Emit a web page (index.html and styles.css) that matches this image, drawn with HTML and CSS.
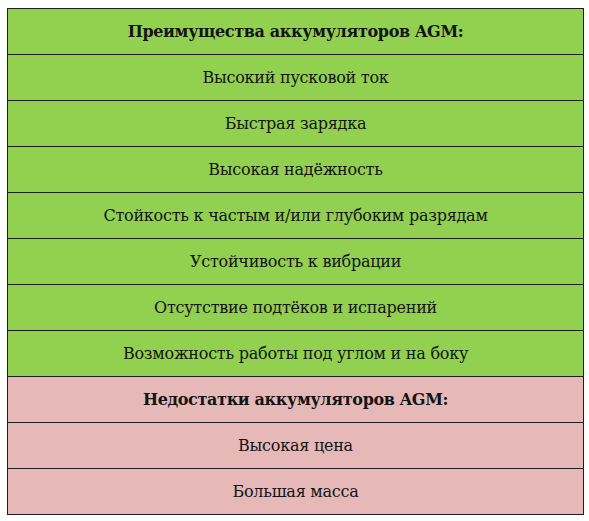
FILE: index.html
```html
<!DOCTYPE html>
<html lang="ru">
<head>
<meta charset="utf-8">
<link rel="stylesheet" href="styles.css">
</head>
<body>
<table class="agm">
  <tr class="pro head"><td>Преимущества аккумуляторов AGM:</td></tr>
  <tr class="pro"><td>Высокий пусковой ток</td></tr>
  <tr class="pro"><td>Быстрая зарядка</td></tr>
  <tr class="pro"><td>Высокая надёжность</td></tr>
  <tr class="pro"><td>Стойкость к частым и/или глубоким разрядам</td></tr>
  <tr class="pro"><td>Устойчивость к вибрации</td></tr>
  <tr class="pro"><td>Отсутствие подтёков и испарений</td></tr>
  <tr class="pro"><td>Возможность работы под углом и на боку</td></tr>
  <tr class="con head"><td>Недостатки аккумуляторов AGM:</td></tr>
  <tr class="con"><td>Высокая цена</td></tr>
  <tr class="con"><td>Большая масса</td></tr>
</table>
</body>
</html>
```
FILE: styles.css
```css
html, body {
  margin: 0;
  padding: 0;
  background: #ffffff;
}
body {
  padding: 8px 0 0 7px;
  font-family: "DejaVu Serif", "Liberation Serif", serif;
  font-size: 16px;
  letter-spacing: -0.25px;
  color: #141414;
}
.agm {
  border-collapse: collapse;
  width: 577px;
}
.agm td {
  border: 1px solid #1e1e1e;
  height: 46px;
  padding: 0;
  text-align: center;
  vertical-align: middle;
  box-sizing: border-box;
}
.pro td { background: #92d050; }
.con td { background: #e6b8b7; }
.head td {
  font-weight: bold;
  letter-spacing: -0.35px;
}
```
